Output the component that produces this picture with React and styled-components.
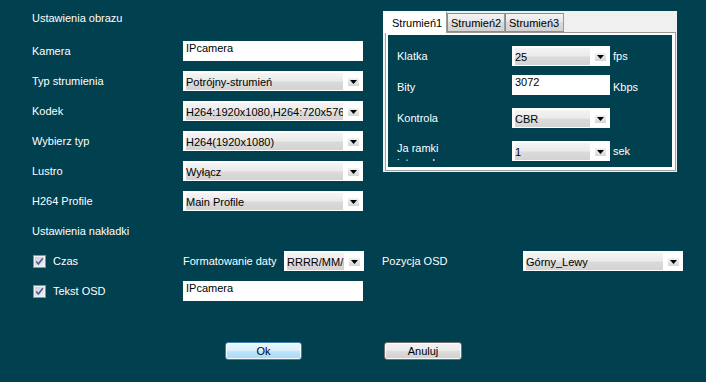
import React from 'react'
import styled, { createGlobalStyle } from 'styled-components'

const GlobalStyle = createGlobalStyle`
  html, body {
    margin: 0;
    padding: 0;
    background: #00404f;
  }
  body {
    font-family: "Liberation Sans", Arial, sans-serif;
    font-size: 11px;
  }
`

const Page = styled.div`
  width: 706px;
  height: 382px;
  box-sizing: border-box;
  padding: 3px 0 0 32px;
  background: #00404f;
  color: #ffffff;
  overflow: hidden;
`

const Top = styled.div`
  display: flex;
  align-items: flex-start;
`

const LeftForm = styled.div`
  width: 351px;
  display: flex;
  flex-direction: column;
`

const Title = styled.div`
  height: 33px;
  line-height: 30px;
`

const FieldRow = styled.div`
  display: grid;
  grid-template-columns: 151px 180px;
  align-items: center;
  height: 30px;
`

const Label = styled.div`
  white-space: nowrap;
`

const TextBox = styled.div`
  box-sizing: border-box;
  width: ${p => p.$w || 180}px;
  height: 20px;
  background: #ffffff;
  color: #000000;
  padding: 1px 3px;
  line-height: 13px;
  white-space: nowrap;
  overflow: hidden;
`

const ComboBox = styled.div`
  box-sizing: border-box;
  width: ${p => p.$w || 180}px;
  height: 20px;
  background: #ffffff;
  display: flex;
  align-items: flex-start;
  padding: 2px 4px 1px 3px;
  gap: 5px;
`

const ComboValue = styled.div`
  flex: 1;
  min-width: 0;
  height: 17px;
  line-height: 18px;
  color: #000000;
  white-space: nowrap;
  overflow: hidden;
  background: linear-gradient(#f4f4f4, #ebebeb 45%, #dadada 55%, #d3d3d3);
`

const ArrowBtn = styled.div`
  width: 11px;
  height: 8px;
  margin-top: 5px;
  background: linear-gradient(#f2f2f2, #d6d6d6);
  display: flex;
  align-items: center;
  justify-content: center;
`

const Combo = ({ w, children }) => (
  <ComboBox $w={w}>
    <ComboValue>{children}</ComboValue>
    <ArrowBtn>
      <svg width="7" height="4" viewBox="0 0 7 4">
        <path d="M0 0 H7 L3.5 4 Z" fill="#000" />
      </svg>
    </ArrowBtn>
  </ComboBox>
)

const TabPanel = styled.div`
  width: 294px;
  height: 161px;
  margin-top: 8px;
  box-sizing: border-box;
  background: #f0f0f0;
  padding: 0 1px 1px 0;
  display: flex;
  flex-direction: column;
  color: #000000;
`

const TabBar = styled.div`
  display: flex;
  align-items: flex-end;
  height: 21px;
  position: relative;
  z-index: 1;
`

const Tab = styled.div`
  box-sizing: border-box;
  width: ${p => p.$w}px;
  height: ${p => (p.$active ? 22 : 19)}px;
  margin-bottom: ${p => (p.$active ? -1 : 0)}px;
  padding-left: ${p => (p.$active ? 8 : 3)}px;
  line-height: ${p => (p.$active ? 22 : 18)}px;
  white-space: nowrap;
  background: ${p => (p.$active ? '#ffffff' : 'linear-gradient(#f3f3f3, #e8e8e8 50%, #dadada 50%, #d2d2d2)')};
  border: 1px solid ${p => (p.$active ? '#ffffff' : '#8c8c8c')};
  border-right-color: #9a9a9a;
  border-bottom: ${p => (p.$active ? 'none' : '1px solid #8c8c8c')};
`

const TabPage = styled.div`
  flex: 1;
  margin-left: 2px;
  border: 1px solid #a0a0a0;
  border-top-color: #9a9a9a;
  background: #00404f;
  box-shadow: inset 2px 2px 0 #ffffff, inset -3px -3px 0 #ffffff;
  padding: 13px 0 0 11px;
  color: #ffffff;
`

const StreamRow = styled.div`
  display: grid;
  grid-template-columns: 112px 98px auto;
  column-gap: 3px;
  align-items: center;
  height: 20px;
  margin-top: ${p => p.$top || 0}px;
`

const Unit = styled.div`
  padding-top: ${p => p.$drop || 0}px;
`

const ClippedLabel = styled.div`
  height: 21px;
  overflow: hidden;
  line-height: 15px;
  padding-top: 1px;
  box-sizing: border-box;
  align-self: start;
  width: 70px;
`

const OsdRow = styled.div`
  display: grid;
  grid-template-columns: 151px 101px 80px 18px 141px 160px;
  align-items: center;
  height: 30px;
`

const CheckLabel = styled.label`
  display: flex;
  align-items: center;
  gap: 7px;
  padding-left: 1px;
`

const CheckIcon = () => (
  <svg width="13" height="13" viewBox="0 0 13 13">
    <defs>
      <linearGradient id="cbg" x1="0" y1="0" x2="1" y2="1">
        <stop offset="0" stopColor="#cfcfcf" />
        <stop offset="1" stopColor="#f2f2f2" />
      </linearGradient>
    </defs>
    <rect x="0.5" y="0.5" width="12" height="12" fill="#f0f0f0" stroke="#8f8f8f" />
    <rect x="2" y="2" width="9" height="9" fill="url(#cbg)" />
    <path d="M3.2 6.4 L5.4 9 L9.8 3.2" fill="none" stroke="#4a5aa8" strokeWidth="1.6" />
  </svg>
)

const Buttons = styled.div`
  display: flex;
  gap: 82px;
  padding-left: 193px;
  margin-top: 36px;
`

const Button = styled.button`
  box-sizing: border-box;
  width: ${p => p.$w}px;
  height: 18px;
  padding: 0;
  font-family: "Liberation Sans", Arial, sans-serif;
  font-size: 11px;
  color: #000000;
  border-radius: 3px;
  border: 1px solid ${p => (p.$primary ? '#3c7fb1' : '#707070')};
  background: ${p =>
    p.$primary
      ? 'linear-gradient(#eaf6fd, #d9f0fc 50%, #bee6fd 50%, #a7d9f5)'
      : 'linear-gradient(#f2f2f2, #ebebeb 50%, #dddddd 50%, #cfcfcf)'};
  box-shadow: inset 0 0 0 1px rgba(255, 255, 255, 0.8);
`

const fields = [
  { label: 'Kamera', input: 'IPcamera' },
  { label: 'Typ strumienia', combo: 'Potrójny-strumień' },
  { label: 'Kodek', combo: 'H264:1920x1080,H264:720x576' },
  { label: 'Wybierz typ', combo: 'H264(1920x1080)' },
  { label: 'Lustro', combo: 'Wyłącz' },
  { label: 'H264 Profile', combo: 'Main Profile' },
]

export default function App() {
  return (
    <>
      <GlobalStyle />
      <Page>
        <Top>
          <LeftForm>
            <Title>Ustawienia obrazu</Title>
            {fields.map(f => (
              <FieldRow key={f.label}>
                <Label>{f.label}</Label>
                {f.input ? <TextBox>{f.input}</TextBox> : <Combo>{f.combo}</Combo>}
              </FieldRow>
            ))}
          </LeftForm>

          <TabPanel>
            <TabBar>
              <Tab $active $w={64}>Strumień1</Tab>
              <Tab $w={58}>Strumień2</Tab>
              <Tab $w={59}>Strumień3</Tab>
            </TabBar>
            <TabPage>
              <StreamRow>
                <Label>Klatka</Label>
                <Combo w={98}>25</Combo>
                <Unit>fps</Unit>
              </StreamRow>
              <StreamRow $top={9}>
                <Label style={{ paddingTop: 3 }}>Bity</Label>
                <TextBox $w={98}>3072</TextBox>
                <Unit $drop={4}>Kbps</Unit>
              </StreamRow>
              <StreamRow $top={13}>
                <Label>Kontrola</Label>
                <Combo w={98}>CBR</Combo>
              </StreamRow>
              <StreamRow $top={12}>
                <ClippedLabel>Ja ramki interwał</ClippedLabel>
                <Combo w={98}>1</Combo>
                <Unit>sek</Unit>
              </StreamRow>
            </TabPage>
          </TabPanel>
        </Top>

        <FieldRow>
          <Label>Ustawienia nakładki</Label>
        </FieldRow>
        <OsdRow>
          <CheckLabel>
            <CheckIcon />
            Czas
          </CheckLabel>
          <Label>Formatowanie daty</Label>
          <Combo w={80}>RRRR/MM/DD</Combo>
          <span />
          <Label>Pozycja OSD</Label>
          <Combo w={160}>Górny_Lewy</Combo>
        </OsdRow>
        <OsdRow>
          <CheckLabel>
            <CheckIcon />
            Tekst OSD
          </CheckLabel>
          <TextBox>IPcamera</TextBox>
        </OsdRow>

        <Buttons>
          <Button $primary $w={77}>Ok</Button>
          <Button $w={78}>Anuluj</Button>
        </Buttons>
      </Page>
    </>
  )
}
